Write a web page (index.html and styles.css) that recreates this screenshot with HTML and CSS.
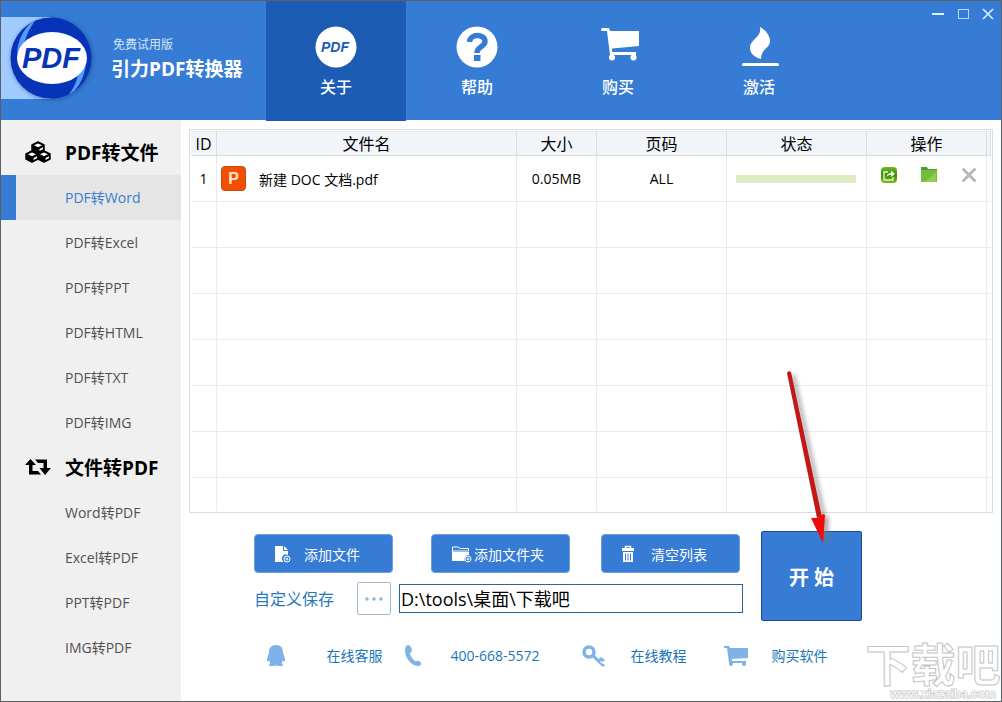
FILE: index.html
```html
<!DOCTYPE html>
<html lang="zh-CN">
<head>
<meta charset="utf-8">
<meta name="viewport" content="width=device-width, initial-scale=1">
<title>引力PDF转换器</title>
<link rel="stylesheet" href="styles.css">
</head>
<body>
<div class="window">
  <header class="header">
    <div class="brand">
      <svg class="brand-logo" viewBox="0 0 98 92" width="98" height="92" aria-hidden="true">
        <defs>
          <filter id="soft" x="-20%" y="-20%" width="140%" height="140%"><feGaussianBlur stdDeviation="2"/></filter>
          <clipPath id="disc"><circle cx="50" cy="46" r="40.500"/></clipPath>
        </defs>
        <rect x="0" y="5" width="50" height="82" fill="#a2cbff"/>
        <circle cx="51" cy="47" r="41" fill="#123a80" opacity=".5" filter="url(#soft)"/>
        <circle cx="50" cy="46" r="40.500" fill="#0633b8"/>
        <g clip-path="url(#disc)">
          <path d="M38 4C24 14 17 26 16 41L24 29C27 19 31 12 38 4Z" fill="#559bfa"/>
          <path d="M63 88C76 79 83 68 85 52L77 63C75 72 71 80 63 88Z" fill="#559bfa"/>
        </g>
        <ellipse cx="51" cy="46" rx="35" ry="26" fill="#fff"/>
        <text x="50" y="56" text-anchor="middle" class="logo-word">PDF</text>
      </svg>
      <div class="brand-text">
        <span class="edition">免费试用版</span>
        <h1 class="title">引力PDF转换器</h1>
      </div>
    </div>
    <nav class="nav">
      <button type="button" class="nav-item nav-item-active">
        <svg viewBox="0 0 42 42" width="42" height="42" aria-hidden="true"><circle cx="21" cy="21" r="20.500" fill="#fff"/><text x="20" y="26" text-anchor="middle" class="nav-word">PDF</text></svg>
        <span>关于</span>
      </button>
      <button type="button" class="nav-item">
        <svg viewBox="0 0 42 42" width="42" height="42" aria-hidden="true"><circle cx="21" cy="21" r="20.500" fill="#fff"/><path d="M13.500 16C14 7.500 29 7.500 29 15.500C29 21 21 20 21 27" fill="none" stroke="#377cd4" stroke-width="5.500"/><rect x="18" y="29" width="6.500" height="6" fill="#377cd4"/></svg>
        <span>帮助</span>
      </button>
      <button type="button" class="nav-item">
        <svg viewBox="0 0 42 42" width="42" height="42" aria-hidden="true"><path d="M5 2H12L13 5H43V20L15 22.500V26H39V29H13L10 5H5Q3 3.500 5 2Z" fill="#fff"/><circle cx="15" cy="31.500" r="3" fill="#fff"/><circle cx="36.500" cy="31.500" r="3" fill="#fff"/></svg>
        <span>购买</span>
      </button>
      <button type="button" class="nav-item">
        <svg viewBox="0 0 42 42" width="42" height="42" aria-hidden="true"><path d="M22 1C27 4 32 9 32 15C32 23 23 22 23 33C16 31 12 27 12 22C12 13 24 12 22 1Z" fill="#fff"/><rect x="4" y="37" width="37" height="3" rx="1.500" fill="#fff"/></svg>
        <span>激活</span>
      </button>
    </nav>
    <div class="window-controls">
      <button type="button" aria-label="最小化"><svg viewBox="0 0 14 14" width="14" height="14"><path d="M1 7H13" stroke="#d9f2ff" stroke-width="2"/></svg></button>
      <button type="button" aria-label="最大化"><svg viewBox="0 0 14 14" width="14" height="14"><rect x="2.500" y="2.500" width="10" height="9" fill="none" stroke="#b5dcf8"/></svg></button>
      <button type="button" aria-label="关闭"><svg viewBox="0 0 14 14" width="14" height="14"><path d="M2 2L12 12M12 2L2 12" stroke="#d9f2ff" stroke-width="1.600"/></svg></button>
    </div>
  </header>

  <div class="body">
    <aside class="sidebar">
      <h2 class="group">
        <svg viewBox="0 0 26 22" width="26" height="22" aria-hidden="true">
          <g stroke="#000" stroke-width="1.500" stroke-linejoin="round">
            <path d="M7 4L13 1L19 4V9L13 12L7 9Z"/><path d="M1 13L7 10L13 13V18L7 21L1 18Z"/><path d="M13 13L19 10L25 13V18L19 21L13 18Z"/>
          </g>
          <g fill="#fff"><path d="M9 4.300L13 2.500L17 4.300L13 6.200Z"/><path d="M14.500 8L18 6.300V8.300L14.500 10Z"/><path d="M3 13.300L7 11.500L11 13.300L7 15.200Z"/><path d="M8.500 17L12 15.300V17.300L8.500 19Z"/><path d="M15 13.300L19 11.500L23 13.300L19 15.200Z"/><path d="M20.500 17L24 15.300V17.300L20.500 19Z"/></g>
        </svg>
        <span>PDF转文件</span>
      </h2>
      <button type="button" class="item item-active">PDF转Word</button>
      <button type="button" class="item">PDF转Excel</button>
      <button type="button" class="item">PDF转PPT</button>
      <button type="button" class="item">PDF转HTML</button>
      <button type="button" class="item">PDF转TXT</button>
      <button type="button" class="item">PDF转IMG</button>
      <h2 class="group">
        <svg viewBox="0 0 26 22" width="26" height="22" aria-hidden="true"><path d="M5.500 3L11 9H7.500V15H13L16 18.500H4V9H0Z"/><path d="M10 3.500H22V12H26L20 19L14.500 12H18.500V7H13Z"/></svg>
        <span>文件转PDF</span>
      </h2>
      <button type="button" class="item">Word转PDF</button>
      <button type="button" class="item">Excel转PDF</button>
      <button type="button" class="item">PPT转PDF</button>
      <button type="button" class="item">IMG转PDF</button>
    </aside>

    <main class="main">
      <div class="list">
        <table class="files">
          <colgroup><col class="c-id"><col><col class="c-size"><col class="c-page"><col class="c-state"><col class="c-action"><col class="c-end"></colgroup>
          <thead>
            <tr><th>ID</th><th>文件名</th><th>大小</th><th>页码</th><th>状态</th><th>操作</th><th></th></tr>
          </thead>
          <tbody>
            <tr>
              <td>1</td>
              <td><div class="file"><span class="file-badge">P</span><span>新建 DOC 文档.pdf</span></div></td>
              <td>0.05MB</td>
              <td>ALL</td>
              <td><div class="progress"></div></td>
              <td>
                <div class="actions">
                  <button type="button" aria-label="打开文件"><svg viewBox="0 0 16 16" width="16" height="16"><defs><linearGradient id="leaf" x1="0" y1="0" x2="0" y2="1"><stop offset="0" stop-color="#72b526"/><stop offset=".5" stop-color="#3c8f0c"/><stop offset="1" stop-color="#75bd10"/></linearGradient></defs><rect width="16" height="16" rx="4" fill="url(#leaf)"/><path d="M7 5H3V13H12V10" fill="none" stroke="#e6f6d0" stroke-width="1.300"/><path d="M5.500 10C6 7 8 6 10 6V3.500L14 7L10 10V8C8 8 6.500 8.500 5.500 10Z" fill="#f2fbe4"/></svg></button>
                  <button type="button" aria-label="打开文件夹"><svg viewBox="0 0 16 16" width="16" height="16"><path d="M0 0H6L7 2H16V15H0Z" fill="#4b9b39"/><path d="M0 3H16V15H0Z" fill="#74bd3c"/><path d="M2 15C7 13 12 9 15 5V15Z" fill="#91cf4b"/></svg></button>
                  <button type="button" aria-label="移除"><svg viewBox="0 0 16 16" width="16" height="16"><path d="M2.500 2.500L13.500 13.500M13.500 2.500L2.500 13.500" stroke="#b8b8b8" stroke-width="3" stroke-linecap="round"/></svg></button>
                </div>
              </td>
              <td></td>
            </tr>
            <tr><td></td><td></td><td></td><td></td><td></td><td></td><td></td></tr>
            <tr><td></td><td></td><td></td><td></td><td></td><td></td><td></td></tr>
            <tr><td></td><td></td><td></td><td></td><td></td><td></td><td></td></tr>
            <tr><td></td><td></td><td></td><td></td><td></td><td></td><td></td></tr>
            <tr><td></td><td></td><td></td><td></td><td></td><td></td><td></td></tr>
            <tr><td></td><td></td><td></td><td></td><td></td><td></td><td></td></tr>
            <tr class="row-last"><td></td><td></td><td></td><td></td><td></td><td></td><td></td></tr>
          </tbody>
        </table>
      </div>

      <div class="controls">
        <div class="tools">
          <div class="tool-row">
            <button type="button" class="tool tool-file">
              <svg viewBox="0 0 17 18" width="17" height="18" aria-hidden="true"><path d="M1 1H9V6H14V10A4 4 0 0 0 10 17H1Z" fill="#fff"/><path d="M10 1L14 5H10Z" fill="#fff"/><circle cx="13" cy="14" r="3" fill="#377cd4" stroke="#fff"/><path d="M11.500 14H14.500M13 12.500V15.500" stroke="#fff"/></svg>
              <span>添加文件</span>
            </button>
            <button type="button" class="tool tool-folder">
              <svg viewBox="0 0 21 18" width="21" height="18" aria-hidden="true"><path d="M1.500 16V2H7L9 3.500H17.500V6H1" fill="none" stroke="#fff"/><path d="M1 7H18V10A4 4 0 0 0 14 16H1Z" fill="#fff"/><circle cx="17" cy="14" r="3" fill="#377cd4" stroke="#fff"/><path d="M15.500 14H18.500M17 12.500V15.500" stroke="#fff"/></svg>
              <span>添加文件夹</span>
            </button>
            <button type="button" class="tool tool-clear">
              <svg viewBox="0 0 14 18" width="14" height="18" aria-hidden="true"><path d="M4.500 3V1.500H9.500V3" fill="none" stroke="#fff" stroke-width="1.500"/><path d="M1 3H13V6H1ZM2 7H12V17H2Z" fill="#fff"/><path d="M4.500 8.500V15.500M7 8.500V15.500M9.500 8.500V15.500" stroke="#377cd4"/></svg>
              <span>清空列表</span>
            </button>
          </div>
          <div class="path-row">
            <label for="save-path">自定义保存</label>
            <button type="button" class="browse" aria-label="浏览"><svg viewBox="0 0 18 4" width="18" height="4"><circle cx="2" cy="2" r="1.700"/><circle cx="9" cy="2" r="1.700"/><circle cx="16" cy="2" r="1.700"/></svg></button>
            <input id="save-path" type="text" value="D:\tools\桌面\下载吧">
          </div>
        </div>
        <div class="start-wrap">
          <button type="button" class="start">开 始</button>
          <svg class="arrow" viewBox="0 0 60 190" width="60" height="190" aria-hidden="true">
            <g fill="#777" opacity=".6" filter="url(#soft)" transform="translate(4 2)"><path d="M7 12L11 11L42 154L38 155Z"/><path d="M31 157L45 153L44 183Z"/></g>
            <path d="M7 12Q8 9 11 11L42 156L37 157Z" fill="#c41818"/>
            <path d="M31 157L38 157L43 153L45 154L43 182Z" fill="#f00a0a"/>
          </svg>
        </div>
      </div>

      <footer class="links">
        <a href="#service" class="link-service"><svg viewBox="0 0 20 22" width="20" height="22" aria-hidden="true"><path d="M10 0C15 0 17 3 17 7C17 9 19 12 19 15C19 17 17.500 17 16.500 15.500C16.500 17 16 18 15.500 18.500C18 19.500 17.500 21.500 13 21L10 20.500L7 21C2.500 21.500 2 19.500 4.500 18.500C4 18 3.500 17 3.500 15.500C2.500 17 1 17 1 15C1 12 3 9 3 7C3 3 5 0 10 0Z"/></svg><span>在线客服</span></a>
        <a href="tel:400-668-5572" class="link-phone"><svg viewBox="0 0 18 22" width="18" height="22" aria-hidden="true"><path d="M4 0C6 0 8 3 8 6C8 7 5 8 6 9C7 12 9 14 11 16C13 17 13 15 15 16L17 18C18 19 16 21 14 21C7 21 1 12 1 6C1 2 2 0 4 0Z"/></svg><span>400-668-5572</span></a>
        <a href="#guide" class="link-guide"><svg viewBox="0 0 24 22" width="24" height="22" aria-hidden="true"><circle cx="7" cy="7" r="5" fill="none" stroke="#7db3e8" stroke-width="3.500"/><path d="M10 12L12 10L17 14L19 12L23 15L21 17L19 16L18 17L23 20L21 22Z"/></svg><span>在线教程</span></a>
        <a href="#buy" class="link-buy"><svg viewBox="0 0 24 22" width="24" height="22" aria-hidden="true"><path d="M0 1H5L6 3H24V13L8 14V16H22V18H5L3 3H0Z"/><circle cx="7" cy="19" r="2"/><circle cx="20" cy="19" r="2"/></svg><span>购买软件</span></a>
      </footer>
    </main>
  </div>

  <svg class="watermark" viewBox="0 0 136 80" width="136" height="80" aria-hidden="true">
    <text x="68" y="61" text-anchor="middle" class="mark-name">下载吧</text>
    <text x="78" y="77" text-anchor="middle" class="mark-url">www.xiazaiba.com</text>
  </svg>
</div>
</body>
</html>
```

FILE: styles.css
```css
* {
  box-sizing: border-box;
}

body {
  margin: 0;
  font-family: "Open Sans", "Noto Sans CJK SC", sans-serif;
  font-size: 14px;
  color: #000;
  background: #fff;
}

button,
input {
  font: inherit;
  color: inherit;
}

button {
  padding: 0;
  border: 0;
  background: none;
  cursor: pointer;
}

svg {
  display: block;
  flex: none;
}

.window {
  position: relative;
  display: flex;
  flex-direction: column;
  min-height: 100vh;
  overflow: hidden;
  border: 1px solid #5b5f66;
  background: #fff;
}

/* Header */

.header {
  display: flex;
  height: 119px;
  background: #377cd4;
  color: #fff;
}

.brand {
  display: flex;
  align-items: flex-start;
  width: 265px;
  padding-top: 11px;
  gap: 12px;
}

.brand-text {
  display: flex;
  flex-direction: column;
  padding-top: 24px;
}

.edition {
  padding-left: 2px;
  font-size: 12px;
  line-height: 18px;
  color: #d5e6fa;
}

.title {
  margin: 0;
  font-size: 19px;
  line-height: 30px;
  font-weight: 700;
  white-space: nowrap;
}

.logo-word,
.nav-word {
  font-family: "Liberation Sans", sans-serif;
  font-weight: bold;
  font-style: italic;
}

.logo-word {
  font-size: 29px;
  fill: #0633b8;
}

.nav-word {
  font-size: 14px;
  fill: #1d5cb5;
}

.nav {
  display: flex;
  gap: 1px;
}

.nav-item {
  display: flex;
  flex-direction: column;
  align-items: center;
  gap: 7px;
  width: 140px;
  height: 120px;
  padding-top: 25px;
  font-size: 16px;
  line-height: 24px;
  font-weight: 500;
}

.nav-item-active {
  background: #1d5cb5;
}

.window-controls {
  display: flex;
  gap: 11px;
  height: 14px;
  margin: 6px 6px 0 auto;
}

/* Sidebar */

.body {
  display: flex;
  flex: 1;
}

.sidebar {
  width: 180px;
  padding-top: 10px;
  background: #f0f0f0;
}

.group {
  display: flex;
  align-items: center;
  gap: 14px;
  height: 45px;
  margin: 0;
  padding: 0 0 2px 24px;
  font-size: 19px;
  font-weight: 700;
  white-space: nowrap;
}

.item {
  display: block;
  width: 100%;
  height: 45px;
  padding: 0 0 2px 64px;
  text-align: left;
  color: #505050;
}

.item-active {
  padding-left: 49px;
  border-left: 15px solid #377cd4;
  background: #e5e5e5;
  color: #3a7cd0;
}

/* File list */

.main {
  flex: 1;
  min-width: 0;
  padding: 9px 8px 0;
}

.list {
  padding: 1px;
  border: 1px solid #dcdcdc;
}

.files {
  width: 100%;
  table-layout: fixed;
  border-collapse: separate;
  border-spacing: 0;
}

.c-id { width: 26px; }
.c-size { width: 80px; }
.c-page { width: 130px; }
.c-state { width: 140px; }
.c-action { width: 120px; }
.c-end { width: 4px; }

.files th {
  height: 25px;
  padding: 0;
  border-right: 1px solid #dcdcdc;
  border-bottom: 1px solid #dcdcdc;
  border-top: 1px solid #e6e6e6;
  background: #f1f5fa;
  font-size: 16px;
  line-height: 22px;
  font-weight: 400;
}

.files td {
  height: 46px;
  padding: 0;
  border-right: 1px solid #ebebeb;
  border-bottom: 1px solid #ebebeb;
  text-align: center;
}

.files td:last-child {
  border-right: 0;
}

.files .row-last td {
  height: 33px;
  border-bottom: 0;
}

.file {
  display: flex;
  align-items: center;
  gap: 13px;
  padding-left: 4px;
}

.file-badge {
  width: 25px;
  height: 25px;
  border: 1px solid #c84a18;
  border-radius: 4px;
  background: #f25000;
  color: #ffe3d3;
  font-family: "Liberation Sans", sans-serif;
  font-size: 16px;
  line-height: 23px;
  font-weight: 700;
}

.progress {
  height: 8px;
  margin: 0 10px 0 9px;
  background: #deebc3;
}

.actions {
  display: flex;
  justify-content: center;
  gap: 24px;
  padding: 0 0 7px 4px;
}

/* Bottom controls */

.controls {
  display: flex;
  justify-content: center;
  gap: 18px;
  padding: 18px 66px 0 0;
}

.tools {
  display: flex;
  flex-direction: column;
  gap: 9px;
  width: 489px;
  padding-top: 3px;
}

.tool-row {
  display: flex;
  gap: 31px;
}

.tool {
  display: flex;
  align-items: center;
  width: 139px;
  height: 39px;
  border: 1px solid #6b9fe0;
  border-radius: 4px;
  background: #377cd4;
  color: #fff;
}

.tool-file {
  gap: 13px;
  padding-left: 19px;
}

.tool-folder {
  gap: 2px;
  margin-left: 7px;
  padding-left: 19px;
}

.tool-clear {
  gap: 16px;
  padding-left: 19px;
}

.path-row {
  display: flex;
  align-items: center;
}

.path-row label {
  width: 103px;
  padding-bottom: 2px;
  font-size: 16px;
  color: #2678bd;
}

.browse {
  display: flex;
  align-items: center;
  justify-content: center;
  width: 34px;
  height: 33px;
  margin-right: 8px;
  border: 1px solid #a5b9cf;
  border-radius: 2px;
  fill: #8eb3da;
}

.path-row input {
  flex: 1;
  min-width: 0;
  height: 29px;
  padding: 0 2px 2px 1px;
  border: 1px solid #2469a5;
  background: #fff;
  font-size: 18px;
  outline: 0;
}

.start-wrap {
  position: relative;
}

.start {
  width: 101px;
  height: 90px;
  border: 1px solid #1d4a96;
  border-radius: 2px;
  background: #377cd4;
  color: #fff;
  font-size: 20px;
  font-weight: 700;
}

.arrow {
  position: absolute;
  left: 19px;
  top: -170px;
  pointer-events: none;
}

/* Support links */

.links {
  display: flex;
  justify-content: center;
  gap: 22px;
  padding: 24px 88px 0 0;
}

.links a {
  display: flex;
  align-items: center;
  color: #1b76b8;
  fill: #7db3e8;
  line-height: 22px;
  text-decoration: none;
  white-space: nowrap;
}

.link-service { gap: 40px; }
.link-phone { gap: 28px; margin-right: 20px; }
.link-guide { gap: 25px; margin-right: 15px; }
.link-buy { gap: 24px; }

.watermark {
  position: absolute;
  right: 0;
  bottom: 0;
  pointer-events: none;
}

.mark-name,
.mark-url {
  font-family: "Noto Sans CJK SC", sans-serif;
  font-weight: 700;
  fill: #fff;
  stroke: #c4c4c4;
}

.mark-name {
  font-size: 45px;
}

.mark-url {
  font-family: "Liberation Sans", sans-serif;
  font-size: 12px;
  fill: #f4f4f4;
  stroke: #bdbdbd;
  stroke-width: 1px;
  paint-order: stroke;
}
```
